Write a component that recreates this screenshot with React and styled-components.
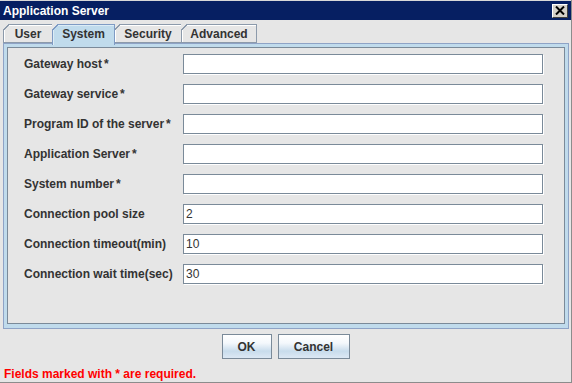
import React, { useState } from 'react';
import styled, { createGlobalStyle } from 'styled-components';

const GlobalStyle = createGlobalStyle`
    html, body {
        margin: 0;
        padding: 0;
        background: #e6e6e6;
    }
    * {
        box-sizing: border-box;
    }
`;

const fields = [
    { label: 'Gateway host', required: true, value: '' },
    { label: 'Gateway service', required: true, value: '' },
    { label: 'Program ID of the server', required: true, value: '' },
    { label: 'Application Server', required: true, value: '' },
    { label: 'System number', required: true, value: '' },
    { label: 'Connection pool size', required: false, value: '2' },
    { label: 'Connection timeout(min)', required: false, value: '10' },
    { label: 'Connection wait time(sec)', required: false, value: '30' },
];

const tabs = [
    { name: 'User', width: 50 },
    { name: 'System', width: 63 },
    { name: 'Security', width: 68 },
    { name: 'Advanced', width: 76 },
];

const App = () => {
    const [active, setActive] = useState('System');

    return (
        <>
            <GlobalStyle />
            <Window>
                <TitleBar>
                    <Title>Application Server</Title>
                    <CloseButton type="button" aria-label="close">
                        <svg width="10" height="9" viewBox="0 0 10 9">
                            <path d="M1 0.5 L9 8.5 M9 0.5 L1 8.5" stroke="#000" strokeWidth="2" />
                        </svg>
                    </CloseButton>
                </TitleBar>

                <TabRow>
                    {tabs.map(tab => (
                        <Tab
                            key={tab.name}
                            $w={tab.width}
                            $active={active === tab.name}
                            onClick={() => setActive(tab.name)}
                        >
                            {tab.name}
                        </Tab>
                    ))}
                </TabRow>

                <Frame>
                    <Panel>
                        {fields.map(field => (
                            <Row key={field.label}>
                                <Label>
                                    {field.label}
                                    {field.required && <Star>*</Star>}
                                </Label>
                                <Input defaultValue={field.value} />
                            </Row>
                        ))}
                    </Panel>
                </Frame>

                <ButtonRow>
                    <Button $w={50}>OK</Button>
                    <Button $w={72}>Cancel</Button>
                </ButtonRow>

                <Note>Fields marked with * are required.</Note>
            </Window>
        </>
    );
};

export default App;

const Window = styled.div`
    width: 572px;
    height: 383px;
    background: #e6e6e6;
    border-right: 1px solid #8c8c8c;
    border-bottom: 1px solid #8c8c8c;
    font-family: "Liberation Sans", Arial, sans-serif;
    font-size: 12px;
    color: #333;
    display: flex;
    flex-direction: column;
`;

const TitleBar = styled.div`
    height: 20px;
    border-top: 1px solid #d8d8d8;
    background: #061f62;
    display: flex;
    align-items: center;
    justify-content: space-between;
    padding: 0 3px 0 3px;
`;

const Title = styled.span`
    color: #fff;
    font-weight: bold;
    font-size: 12px;
`;

const CloseButton = styled.button`
    width: 16px;
    height: 14px;
    padding: 0;
    margin: 0;
    display: flex;
    align-items: center;
    justify-content: center;
    background: #d4d0c8;
    border: 1px solid;
    border-color: #fff #404040 #404040 #fff;
`;

const TabRow = styled.div`
    display: flex;
    margin-top: 4px;
    padding-left: 3px;
    height: 19px;
    position: relative;
    z-index: 1;
`;

const Tab = styled.div`
    position: relative;
    width: ${p => p.$w}px;
    height: ${p => (p.$active ? '21px' : '19px')};
    margin-right: -1px;
    display: flex;
    justify-content: center;
    align-items: flex-start;
    padding-top: 2px;
    font-weight: bold;
    font-size: 12px;
    color: #333;
    cursor: default;
    z-index: ${p => (p.$active ? 2 : 1)};
    border: 1px solid ${p => (p.$active ? '#7f9bc4' : '#8c9aab')};
    border-bottom: ${p => (p.$active ? 'none' : '1px solid #8c9aab')};
    background: ${p => (p.$active ? '#c0dbec' : '#e6e6e6')};
    box-shadow: ${p => (p.$active ? 'inset 1px 1px 0 #dcecf6' : 'inset 1px 1px 0 #fff')};
    &::before {
        content: "";
        position: absolute;
        top: -1px;
        left: -1px;
        width: 6px;
        height: 6px;
        background: linear-gradient(135deg, #e6e6e6 48%, ${p => (p.$active ? '#7f9bc4' : '#8c9aab')} 48%, ${p => (p.$active ? '#7f9bc4' : '#8c9aab')} 62%, transparent 62%);
    }
`;

const Frame = styled.div`
    margin: 0 2px 0 3px;
    height: 286px;
    border: 1px solid #8ea3c6;
    background: #c0dbec;
    padding: 3px 3px 4px 3px;
`;

const Panel = styled.div`
    height: 100%;
    border: 1px solid #7a8a99;
    background: #e6e6e6;
    padding: 6px 21px 0 16px;
    display: flex;
    flex-direction: column;
    gap: 10px;
`;

const Row = styled.div`
    display: grid;
    grid-template-columns: 159px 1fr;
    align-items: center;
    height: 20px;
`;

const Label = styled.label`
    font-weight: bold;
    font-size: 12px;
    color: #333;
    white-space: nowrap;
`;

const Star = styled.span`
    margin-left: 2px;
`;

const Input = styled.input`
    height: 20px;
    width: 100%;
    margin: 0;
    border: 1px solid #7a8a99;
    box-shadow: inset 1px 1px 0 #fff, 1px 1px 0 #fff;
    background: #fff;
    padding: 0 2px;
    font-family: "Liberation Sans", Arial, sans-serif;
    font-size: 12px;
    color: #333;
    outline: none;
`;

const ButtonRow = styled.div`
    display: flex;
    justify-content: center;
    gap: 6px;
    margin-top: 5px;
`;

const Button = styled.button`
    width: ${p => p.$w}px;
    height: 25px;
    padding: 0;
    border: 1px solid #7a8a99;
    background: linear-gradient(#ffffff 0%, #f4f8fc 35%, #c8dcec 70%, #dce8f4 100%);
    font-family: "Liberation Sans", Arial, sans-serif;
    font-weight: bold;
    font-size: 12px;
    color: #333;
`;

const Note = styled.div`
    margin-top: 8px;
    padding-left: 4px;
    color: #ff0000;
    font-weight: bold;
    font-size: 12px;
`;
